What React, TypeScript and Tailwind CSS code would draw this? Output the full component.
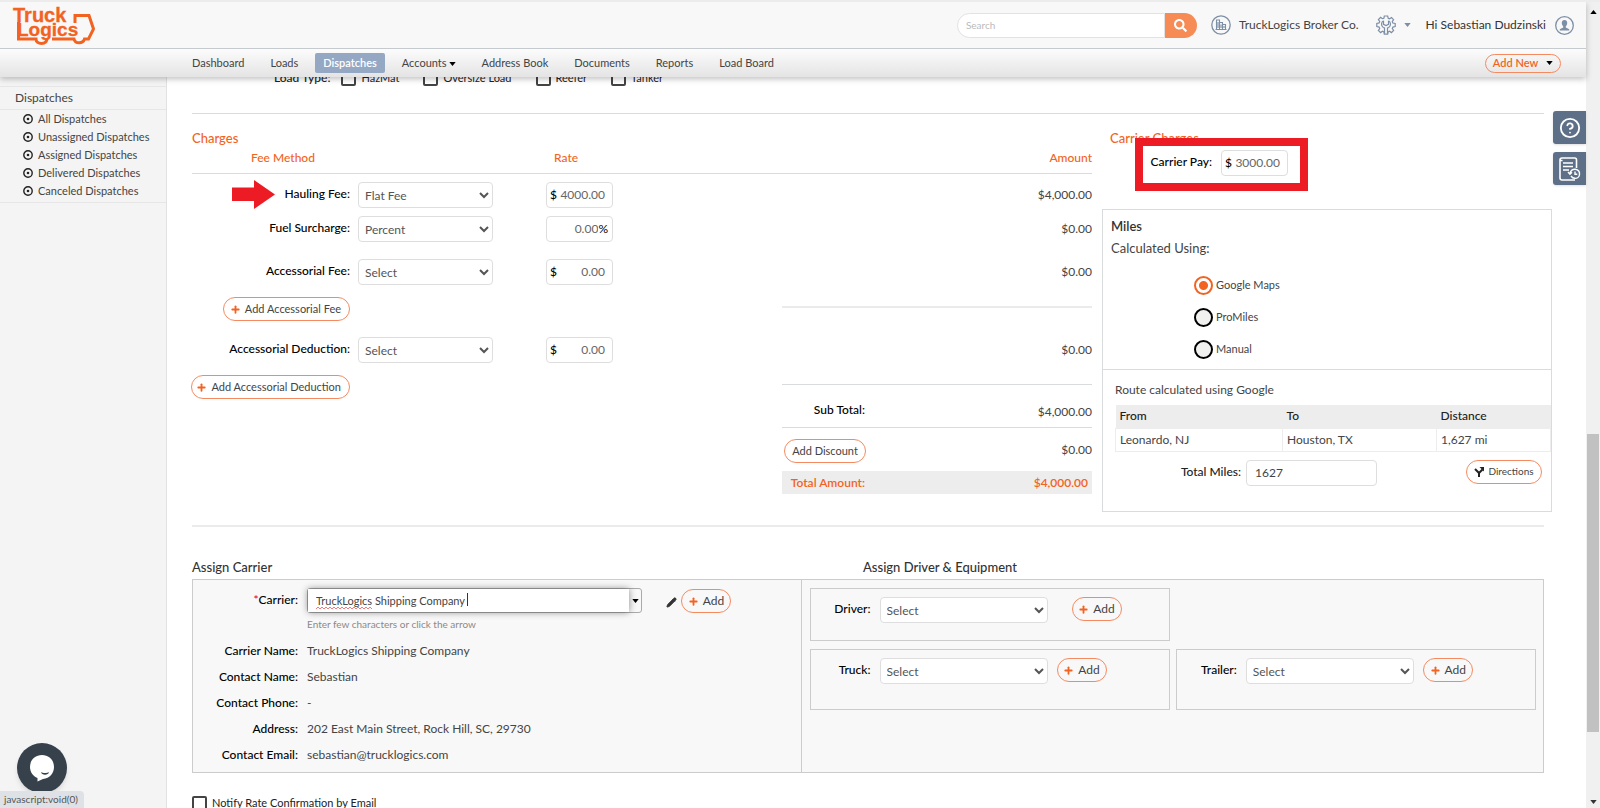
import type { ReactNode } from "react";
import { CircleQuestionMark, Plus, Pencil } from "lucide-react";
import { FaSearch } from "react-icons/fa";

const navLeft = ["Dashboard", "Loads", "Dispatches", "Accounts", "Address Book", "Documents", "Reports", "Load Board"];
const sideLinks = ["All Dispatches", "Unassigned Dispatches", "Assigned Dispatches", "Delivered Dispatches", "Canceled Dispatches"];

const carrierInfo = [
    ["Carrier Name:", "TruckLogics Shipping Company"],
    ["Contact Name:", "Sebastian"],
    ["Contact Phone:", "-"],
    ["Address:", "202 East Main Street, Rock Hill, SC, 29730"],
    ["Contact Email:", "sebastian@trucklogics.com"],
];

function Logo() {
    return (
        <svg width="84" height="40" viewBox="0 0 84 40" className="text-[#f26322]" aria-label="TruckLogics">
            <g fill="currentColor" stroke="currentColor" strokeWidth="0.3" fontFamily="'Liberation Sans', Arial, sans-serif" fontWeight="700">
                <text x="1" y="17" fontSize="20">Truck</text>
                <text x="5" y="31" fontSize="19">Logics</text>
            </g>
            <path d="M6.500 17V34H24C24 37 26.500 38.500 29.500 38.500C33 38.500 35 36.500 35 33M40 34H62C63 39 71 39 72.500 34H76.500L81.500 24L77 10.500H63V18" fill="none" stroke="currentColor" strokeWidth="3" />
        </svg>
    );
}

function BuildingIcon() {
    return (
        <svg width="20" height="20" viewBox="0 0 20 20" fill="none" stroke="#7d8fa6">
            <circle cx="10" cy="10" r="9.200" strokeWidth="1.300" />
            <path d="M5.500 14.500V5H8.500V14.500M8.500 7.500H11.500V14.500M11.500 9.500H14.500V14.500M4.500 14.500H15.500M7 7V13M10 9.500V13M13 11V13" strokeWidth="1.100" />
        </svg>
    );
}

function GearIcon() {
    return (
        <svg width="20" height="20" viewBox="0 0 20 20" fill="none" stroke="#7d8fa6" strokeWidth="1.200">
            <path d="M8.300 1H11.700L12.200 3.200L13.600 3.800L15.500 2.500L17.600 4.700L16.300 6.500L16.800 8L19.200 8.400V11.600L16.900 12.100L16.300 13.500L17.600 15.400L15.400 17.600L13.500 16.300L12.100 16.900L11.700 19.200H8.300L7.900 16.900L6.500 16.300L4.600 17.600L2.400 15.400L3.700 13.500L3.100 12.100L0.800 11.600V8.400L3.100 7.900L3.700 6.500L2.400 4.600L4.600 2.400L6.500 3.700L7.900 3.200Z" />
            <path d="M7.500 5.800C5 7 4.800 11 7.300 12.500L8.500 13V18.500M12.500 5.800C15 7 15.200 11 12.700 12.500L11.500 13V18.500M7.500 5.800V9.300L10 10.600L12.500 9.300V5.800" />
        </svg>
    );
}

function UserIcon() {
    return (
        <svg width="19" height="19" viewBox="0 0 19 19" fill="none">
            <circle cx="9.500" cy="9.500" r="8.800" stroke="#7d8fa6" strokeWidth="1.300" />
            <path d="M9.500 4C7.600 4 6.600 5.300 6.800 7.200C6.900 8.600 7.500 9.700 8.200 10.300V11.600L4.800 13.200V14.500H14.200V13.200L10.800 11.600V10.300C11.500 9.700 12.100 8.600 12.200 7.200C12.400 5.300 11.400 4 9.500 4Z" fill="#7d8fa6" />
        </svg>
    );
}

function HistoryIcon() {
    return (
        <svg width="22" height="24" viewBox="0 0 22 24" fill="none" stroke="white" strokeWidth="1.600">
            <path d="M17.500 11V3C17.500 1.800 17 1 15.800 1H3C1.800 1 1 1.800 1 3V21C1 22.200 1.800 23 3 23H16M1 3.500H3.500M4 6H14M4 9.500H14M4 13H10" />
            <path d="M11 16.500C11.300 13.500 14 12 16.300 12.300C19 12.700 20.800 14.800 20.500 17.500C20.200 20 18 21.500 15.800 21.300C14 21.200 12.800 20.200 12 19M9 15L11 17.200L13 15.200M16 14.500V17.200H18.300" strokeWidth="1.400" />
        </svg>
    );
}

function Caret({ className }: { className: string }) {
    return (
        <svg width="7" height="4" viewBox="0 0 8 5" className={className}>
            <path d="M0 0H8L4 5Z" fill="currentColor" />
        </svg>
    );
}

function Pill({ children, plus, className = "" }: { children: ReactNode; plus?: boolean; className?: string }) {
    return (
        <button className={`flex shrink-0 items-center justify-center gap-1 rounded-full border border-[#f58a61] whitespace-nowrap ${className}`}>
            {plus && <Plus size={11} strokeWidth={4} className="text-[#f26322]" />}
            {children}
        </button>
    );
}

function Select({ id, value, className }: { id: string; value: string; className: string }) {
    return (
        <select id={id} className={`h-[26px] rounded border border-[#dedede] bg-white px-[2px] text-[12px] text-[#555] ${className}`}>
            <option>{value}</option>
        </select>
    );
}

function MoneyInput({ id, value, percent, className = "" }: { id: string; value: string; percent?: boolean; className?: string }) {
    return (
        <div className={`flex h-[26px] w-[67px] items-center rounded border border-[#dedede] bg-white text-[12px] ${className}`}>
            {!percent && <span className="pl-[3px] font-medium text-black">$</span>}
            <input id={id} aria-label="Rate" defaultValue={value} className={`min-w-0 flex-1 bg-transparent text-right text-[#666] outline-none ${percent ? "" : "pr-[7px]"}`} />
            {percent && <span className="pr-1 text-black">%</span>}
        </div>
    );
}

function FeeRow({ id, label, method, rate, amount, percent, arrow, className = "" }: { id: string; label: string; method: string; rate: string; amount: string; percent?: boolean; arrow?: boolean; className?: string }) {
    return (
        <div className={`flex items-start ${className}`}>
            <div className="relative w-[158px] shrink-0 text-right leading-6 font-medium text-black">
                {arrow && (
                    <svg width="43" height="29" viewBox="0 0 43 29" className="absolute top-[-2px] left-10">
                        <path d="M0 7.500H22V0L43 14.500L22 29V21H0Z" fill="#ed1c24" />
                    </svg>
                )}
                <label htmlFor={id}>{label}</label>
            </div>
            <Select id={id} value={method} className="ml-2 w-[135px]" />
            <MoneyInput id={`${id}-rate`} value={rate} percent={percent} className="ml-[53px]" />
            <span className="ml-auto leading-[26px]">{amount}</span>
        </div>
    );
}

function Equipment({ id, label, className = "", addClass = "ml-[9px]" }: { id: string; label: string; className?: string; addClass?: string }) {
    return (
        <div className={`flex items-start border border-[#ccc] pt-2 ${className}`}>
            <label htmlFor={id} className="w-[60px] shrink-0 text-right leading-6 font-medium text-black">{label}</label>
            <Select id={id} value="Select" className="ml-[9px] w-[168px]" />
            <Pill plus className={`h-6 w-[50px] ${addClass}`}>Add</Pill>
        </div>
    );
}

function Header() {
    return (
        <header className="relative z-10 shadow-[0_2px_6px_rgba(0,0,0,0.25)]">
            <div className="flex h-[47px] items-center border-b border-[#c4cacd] bg-[#f8f8f8] pl-3">
                <a href="#"><Logo /></a>
                <div className="ml-auto flex h-[25px] w-[240px]">
                    <input aria-label="Search" placeholder="Search" className="min-w-0 flex-1 rounded-l-full border border-[#e2e2e2] bg-white pl-2 text-[10px] outline-none placeholder:text-[#bbb]" />
                    <button aria-label="Search" className="flex w-8 items-center justify-center rounded-r-full bg-[#f68b56] text-white"><FaSearch size={13} /></button>
                </div>
                <a href="#" className="ml-[14px] flex items-center gap-2"><BuildingIcon />TruckLogics Broker Co.</a>
                <button aria-label="Settings" className="ml-[17px] flex items-center gap-2"><GearIcon /><Caret className="text-[#7d8fa6]" /></button>
                <a href="#" className="mr-3 ml-[15px] flex items-center gap-[9px] text-[#333]">Hi Sebastian Dudzinski <UserIcon /></a>
            </div>
            <nav className="flex h-7 items-center bg-linear-to-b from-[#fcfcfc] to-[#e4e4e4] pl-[179px] text-[11px]">
                {navLeft.map((item) => (
                    <a key={item} href="#" className={`flex h-5 items-center gap-[2px] rounded-[2px] ${item === "Dispatches" ? "mx-1 bg-[#94a7c3] px-2 font-semibold text-white" : "px-[13px]"}`}>
                        {item}
                        {item === "Accounts" && <Caret className="mt-[2px] text-black" />}
                    </a>
                ))}
                <Pill className="mr-[25px] ml-auto h-[19px] w-[76px] font-semibold text-[#f26322]">Add New <Caret className="ml-1 text-black" /></Pill>
            </nav>
        </header>
    );
}

function Sidebar() {
    return (
        <aside className="w-[167px] shrink-0 border-r border-[#e2e2e2] bg-[#f4f4f4] pt-[9px]">
            <h2 className="border-y border-[#e6e6e6] pl-[15px] text-[12px] leading-[22px]">Dispatches</h2>
            <ul className="border-b border-[#e6e6e6] pb-[2px] text-[11px]">
                {sideLinks.map((link) => (
                    <li key={link}>
                        <a href="#" className="flex items-center gap-[5px] pl-[23px] leading-[18px] whitespace-nowrap">
                            <svg width="10" height="10" viewBox="0 0 10 10" className="shrink-0">
                                <circle cx="5" cy="5" r="4.200" fill="none" stroke="#222" strokeWidth="1.400" />
                                <circle cx="5" cy="5" r="1.300" fill="#222" />
                            </svg>
                            {link}
                        </a>
                    </li>
                ))}
            </ul>
        </aside>
    );
}

function Charges() {
    return (
        <section>
            <h2 className="text-[13px] leading-5 font-medium text-[#f26322]">Charges</h2>
            <div className="flex h-[26px] border-b border-[#d9dcdc] leading-5 font-medium text-[#f26322]">
                <span className="ml-[59px] w-[303px]">Fee Method</span>
                <span>Rate</span>
                <span className="ml-auto">Amount</span>
            </div>
            <FeeRow id="hauling" label="Hauling Fee:" method="Flat Fee" rate="4000.00" amount="$4,000.00" arrow className="mt-2" />
            <FeeRow id="fuel" label="Fuel Surcharge:" method="Percent" rate="0.00" amount="$0.00" percent className="mt-2" />
            <FeeRow id="accessorial" label="Accessorial Fee:" method="Select" rate="0.00" amount="$0.00" className="mt-[17px]" />
            <div className="mt-3 flex justify-between">
                <div className="flex h-6 w-[158px] justify-end"><Pill plus className="pr-2 pl-1.5 text-[11px]">Add Accessorial Fee</Pill></div>
                <div className="mt-[9px] w-[310px] border-t-2 border-[#ebebeb]" />
            </div>
            <FeeRow id="deduction" label="Accessorial Deduction:" method="Select" rate="0.00" amount="$0.00" className="mt-4" />
            <div className="mt-3 flex justify-between">
                <div className="flex h-6 w-[158px] justify-end"><Pill plus className="pr-2 pl-1 text-[11px]">Add Accessorial Deduction</Pill></div>
                <div className="mt-[9px] w-[310px] border-t border-[#d9dcdc]">
                    <div className="flex h-[43px] items-start border-b border-[#d9dcdc]">
                        <span className="w-[83px] pt-[13px] text-right leading-6 font-medium text-black">Sub Total:</span>
                        <span className="ml-auto pt-[15px] leading-6">$4,000.00</span>
                    </div>
                    <div className="flex h-[43px] items-center">
                        <Pill className="mt-[3px] ml-[2px] h-6 w-[82px] text-[11px]">Add Discount</Pill>
                        <span className="ml-auto">$0.00</span>
                    </div>
                    <div className="flex h-[23px] items-center bg-[#ededed] font-semibold text-[#f26322]">
                        <span className="w-[83px] text-right">Total Amount:</span>
                        <span className="mr-1 ml-auto">$4,000.00</span>
                    </div>
                </div>
            </div>
        </section>
    );
}

function CarrierCharges() {
    return (
        <section>
            <h2 className="pl-2 text-[13px] leading-5 font-medium text-[#f26322]">Carrier Charges</h2>
            <div className="relative z-10 mt-[-10px] ml-[33px] flex h-[53px] w-[173px] items-start border-8 border-[#ed1c24] bg-white pt-1">
                <label htmlFor="carrier-pay" className="w-[69px] text-right leading-6 font-medium text-black">Carrier Pay:</label>
                <MoneyInput id="carrier-pay" value="3000.00" className="ml-[9px]" />
            </div>
            <div className="mt-[18px] h-[303px] border border-[#d9dcdc]">
                <fieldset className="h-[160px] border-b border-[#d9dcdc] pt-[5px] pl-2">
                    <h3 className="text-[13px] leading-[22px] font-semibold text-[#333]">Miles</h3>
                    <p className="text-[13px] leading-[22px]">Calculated Using:</p>
                    <div className="mt-[10px] flex flex-col pl-[83px] text-[11px]">
                        {["Google Maps", "ProMiles", "Manual"].map((name, i) => (
                            <label key={name} className="flex h-8 items-center gap-[3px]">
                                <input type="radio" name="miles" defaultChecked={i === 0} className="size-[19px] appearance-none rounded-full border-2 border-black bg-[#f1f1ef] checked:border-[#f26322] checked:bg-[radial-gradient(circle,#f26322_4px,white_5px)]" />
                                {name}
                            </label>
                        ))}
                    </div>
                </fieldset>
                <p className="pt-2 pl-3 leading-6">Route calculated using Google</p>
                <div className="mt-[3px] pl-3">
                    <table className="w-full table-fixed text-left">
                        <thead className="bg-[#ededed] text-[#222]">
                            <tr className="h-[23px]">
                                <th className="w-[167px] pl-1 font-medium">From</th>
                                <th className="w-[154px] pl-1 font-medium">To</th>
                                <th className="pl-1 font-medium">Distance</th>
                            </tr>
                        </thead>
                        <tbody>
                            <tr className="h-[23px]">
                                <td className="border border-[#ededed] pl-1">Leonardo, NJ</td>
                                <td className="border border-[#ededed] pl-1">Houston, TX</td>
                                <td className="border border-[#ededed] pl-1">1,627 mi</td>
                            </tr>
                        </tbody>
                    </table>
                </div>
                <div className="mt-2 flex items-start pr-[9px]">
                    <label htmlFor="total-miles" className="w-[138px] text-right leading-6 font-medium text-[#222]">Total Miles:</label>
                    <input id="total-miles" defaultValue="1627" className="ml-[5px] h-[26px] w-[131px] rounded border border-[#dedede] pl-2" />
                    <Pill className="ml-auto h-6 w-[76px] text-[10px]">
                        <svg width="10" height="10" viewBox="0 0 10 10" fill="none" stroke="#222" strokeWidth="2">
                            <path d="M5 10V6L8.500 2.500M5 6L1 2" />
                            <path d="M5.500 0H10V4.500Z" fill="#222" stroke="none" />
                        </svg>
                        Directions
                    </Pill>
                </div>
            </div>
        </section>
    );
}

function AssignPanel() {
    return (
        <section className="mr-2">
            <div className="flex text-[13px] leading-6 font-medium text-[#333]">
                <h2 className="w-[671px]">Assign Carrier</h2>
                <h2>Assign Driver &amp; Equipment</h2>
            </div>
            <div className="grid grid-cols-[45%_55%] border border-[#ccc] bg-[#f8f8f8]">
                <div className="pt-2 pb-1">
                    <div className="flex">
                        <label htmlFor="carrier" className="w-[105px] shrink-0 text-right leading-6 font-medium text-black"><span className="text-red-600">*</span>Carrier:</label>
                        <div className="ml-[9px] flex h-[25px] w-[335px] rounded-[3px] border border-[#aaa]">
                            <div className="relative flex-1 bg-white shadow-[0_0_7px_rgba(0,0,0,0.45)]">
                                <input id="carrier" defaultValue="TruckLogics Shipping Company" spellCheck={false} className="h-full w-full pl-2 text-[11px] outline-none" />
                                {/* spelling squiggle and text cursor */}
                                <svg width="160" height="18" className="absolute bottom-[2px] left-2">
                                    <path d="M0 17L2 15L4 17L6 15L8 17L10 15L12 17L14 15L16 17L18 15L20 17L22 15L24 17L26 15L28 17L30 15L32 17L34 15L36 17L38 15L40 17L42 15L44 17L46 15L48 17L50 15L52 17L54 15L56 17" fill="none" stroke="#f04040" strokeWidth="0.700" />
                                    <path d="M151.500 1V14" stroke="#333" />
                                </svg>
                            </div>
                            <button aria-label="Show carriers" className="flex w-3 items-center justify-center"><Caret className="text-black" /></button>
                        </div>
                        <button aria-label="Edit carrier" className="ml-6 pt-1 text-[#333]"><Pencil size={11} fill="currentColor" /></button>
                        <Pill plus className="mt-px ml-1 h-6 w-[50px]">Add</Pill>
                    </div>
                    <p className="ml-[114px] text-[10px] leading-[22px] text-[#8a8a8a]">Enter few characters or click the arrow</p>
                    <dl className="pt-[3px]">
                        {carrierInfo.map(([name, value]) => (
                            <div key={name} className="flex leading-[26px]">
                                <dt className="w-[105px] text-right font-medium text-black">{name}</dt>
                                <dd className="ml-[9px]">{value}</dd>
                            </div>
                        ))}
                    </dl>
                </div>
                <div className="grid grid-cols-2 content-start gap-x-1.5 gap-y-2 border-l border-[#ccc] p-2 pr-[7px]">
                    <Equipment id="driver" label="Driver:" className="h-[53px]" addClass="ml-6" />
                    <div />
                    <Equipment id="truck" label="Truck:" className="h-[61px]" />
                    <Equipment id="trailer" label="Trailer:" className="h-[61px]" />
                </div>
            </div>
        </section>
    );
}

function CheckItem({ label }: { label: string }) {
    return (
        <label className="flex items-center gap-[5px] text-[11px]">
            <input type="checkbox" className="size-[15px] shrink-0 appearance-none rounded-[2px] border-2 border-[#444] bg-white" />
            {label}
        </label>
    );
}

export default function App() {
    return (
        <div className="relative flex h-screen overflow-hidden border-t-2 border-[#ececec] bg-white font-['Lato','Open_Sans',sans-serif] text-[12px] text-[#444]">
            <div className="flex min-w-0 flex-1 flex-col">
                <Header />
                <div className="flex min-h-0 flex-1">
                    <Sidebar />
                    <main className="min-w-0 flex-1 overflow-hidden pr-[34px] pl-[25px]">
                        <div className="mt-[-7px] flex h-4 items-center gap-6 pl-[82px] text-[#222]">
                            <span className="mr-[-13px] font-medium">Load Type:</span>
                            <CheckItem label="HazMat" />
                            <CheckItem label="Oversize Load" />
                            <CheckItem label="Reefer" />
                            <CheckItem label="Tanker" />
                        </div>
                        <hr className="mt-[27px] mr-2 border-[#d9dcdc]" />
                        <div className="mt-[14px] grid grid-cols-[2fr_1fr] gap-[10px]">
                            <Charges />
                            <CarrierCharges />
                        </div>
                        <hr className="mt-[13px] mr-2 mb-7 border-t-2 border-[#ebebeb]" />
                        <AssignPanel />
                        <div className="mt-[22px] text-[#222]"><CheckItem label="Notify Rate Confirmation by Email" /></div>
                    </main>
                </div>
            </div>
            {/* scroll track */}
            <div className="flex w-[14px] shrink-0 flex-col items-center bg-[#f0f0f0] py-1">
                <Caret className="mt-1 rotate-180 text-black" />
                <div className="h-[420px]" />
                <div className="h-[298px] w-3 bg-[#c1c1c1]" />
                <Caret className="mt-auto text-[#333]" />
            </div>
            <div className="absolute top-[109px] right-[14px] z-10 flex flex-col gap-2">
                <button aria-label="Help" className="flex size-[33px] items-center justify-center rounded-l-[3px] bg-[#5d7088] text-white shadow"><CircleQuestionMark size={22} strokeWidth={2} /></button>
                <button aria-label="History" className="flex size-[33px] items-center justify-center rounded-l-[3px] bg-[#5d7088] shadow"><HistoryIcon /></button>
            </div>
            <button aria-label="Chat" className="absolute bottom-[15px] left-[17px] z-10 flex size-[50px] items-center justify-center rounded-full bg-[#36414c] shadow-md">
                <svg width="26" height="28" viewBox="0 0 26 28">
                    <path d="M13 1C6 1 1 6 1 13C1 18 4 22 8.500 24V27.500L14 25C21 24.500 25 19 25 13C25 6 20 1 13 1Z" fill="white" />
                    <path d="M12 18C14 19.300 18 19.300 20 18C19.500 21.500 12.500 21.500 12 18Z" fill="#36414c" />
                </svg>
            </button>
            <div className="absolute bottom-0 left-0 z-10 rounded-tr bg-[#dee1e6] pr-[6px] pl-1 text-[10px] leading-[17px] text-[#555]">javascript:void(0)</div>
        </div>
    );
}
